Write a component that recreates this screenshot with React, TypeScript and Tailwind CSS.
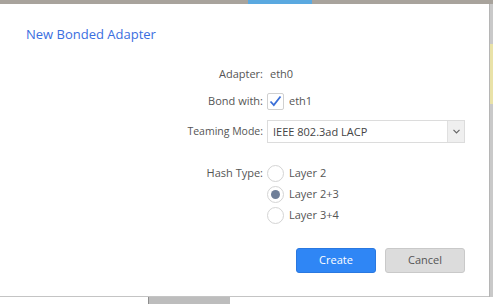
import React, { useState } from "react";

const hashTypes = ["Layer 2", "Layer 2+3", "Layer 3+4"];

const App = () => {
  const [bond, setbond] = useState(true);
  const [hash, sethash] = useState("Layer 2+3");

  return (
    <div
      className="w-[493px] h-[304px] bg-[#d9d9d9] flex flex-col overflow-hidden"
      style={{ fontFamily: '"Open Sans", "Liberation Sans", sans-serif' }}
    >
      {/* tab strip behind the dialog */}
      <div className="h-[4px] flex shrink-0 bg-[#a8a39c]">
        <div className="w-[248px]" />
        <div className="w-[64px] bg-[#5aa9e0]" />
        <div className="flex-1" />
      </div>

      <div className="flex flex-1">
        <div className="w-[489px] h-[293px] bg-white border-b border-[#c4c4c4] flex flex-col">
          <h1 className="pl-[26px] pt-[20px] text-[13px] leading-[20px] text-[#3a6ee0]">
            New Bonded Adapter
          </h1>

          <div className="grid grid-cols-[263px_1fr] gap-x-[4px] mt-[20px] text-[11px] text-[#555]">
            <div className="text-right h-[20px] leading-[20px]">Adapter:</div>
            <div className="h-[20px] leading-[20px] pl-[3px]">eth0</div>

            <div className="text-right mt-[7px] h-[20px] leading-[20px]">Bond with:</div>
            <div className="mt-[7px] flex items-center gap-[5px] h-[20px]">
              <button
                onClick={() => setbond(!bond)}
                className="w-[17px] h-[17px] border border-[#d0d0d0] rounded-[2px] bg-white flex items-center justify-center"
              >
                {bond && (
                  <svg width="13" height="12" viewBox="0 0 13 12">
                    <path d="M1.5 6.5 L4.8 10 L11.5 1.5" fill="none" stroke="#3b6fd8" strokeWidth="1.8" />
                  </svg>
                )}
              </button>
              <span>eth1</span>
            </div>

            <div className="text-right mt-[9px] h-[23px] leading-[23px] text-[10.5px]">Teaming Mode:</div>
            <div className="mt-[9px] flex h-[23px] w-[198px] border border-[#dcdcdc] bg-white">
              <div className="flex-1 pl-[5px] leading-[21px] text-[#444]">IEEE 802.3ad LACP</div>
              <div className="w-[17px] border-l border-[#e0e0e0] bg-[#efefef] flex items-center justify-center">
                <svg width="7" height="5" viewBox="0 0 7 5">
                  <path d="M0.5 0.8 L3.5 3.8 L6.5 0.8" fill="none" stroke="#666" strokeWidth="1.2" />
                </svg>
              </div>
            </div>

            <div className="text-right mt-[21px] h-[18px] leading-[18px]">Hash Type:</div>
            <div className="mt-[21px] flex flex-col gap-[3px]">
              {hashTypes.map((h) => (
                <div key={h} className="flex items-center gap-[5px] h-[18px] cursor-pointer" onClick={() => sethash(h)}>
                  <span className="w-[17px] h-[17px] rounded-full border border-[#d4d4d4] bg-white flex items-center justify-center">
                    {hash === h && <span className="w-[9px] h-[9px] rounded-full bg-[#6f7f99]" />}
                  </span>
                  <span>{h}</span>
                </div>
              ))}
            </div>
          </div>

          <div className="flex justify-end gap-[9px] pr-[24px] mt-[24px]">
            <button className="w-[80px] h-[25px] rounded-[3px] bg-[#2f86f5] border border-[#2a78e0] text-white text-[11px]">
              Create
            </button>
            <button className="w-[80px] h-[25px] rounded-[3px] bg-[#dcdcdc] border border-[#c9c9c9] text-[#555] text-[11px]">
              Cancel
            </button>
          </div>
        </div>
        <div className="flex-1 bg-[#c9c9c9] border-l border-[#b5b5b5]">
          <div className="h-[40px]" />
          <div className="h-[60px] bg-[#e9e2a8]" />
        </div>
      </div>

      <div className="h-[7px] shrink-0 bg-white flex">
        <div className="w-[148px]" />
        <div className="w-[82px] bg-[#bdbdbd] border-l border-[#8d8d8d]" />
      </div>
    </div>
  );
};

export default App;
